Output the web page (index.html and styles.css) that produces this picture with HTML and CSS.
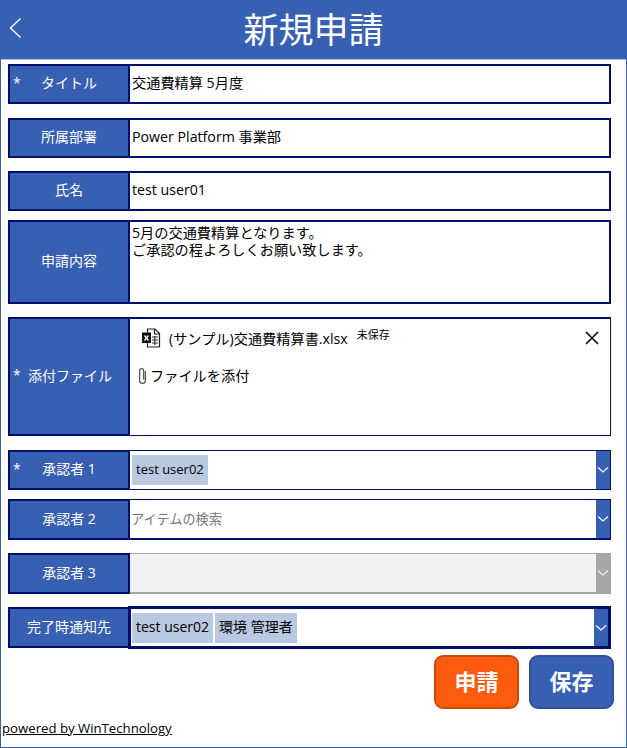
FILE: index.html
```html
<!DOCTYPE html>
<html>
<head>
    <title>新規申請</title>
    <link rel="stylesheet" href="styles.css">
</head>
<body>
    <div class="screen">
        <div class="header">
            <svg class="back" width="14" height="22" viewBox="0 0 14 22">
                <path d="M12.5 1.5 L2.5 11 L12.5 20.5" fill="none" stroke="#fff" stroke-width="1.4"/>
            </svg>
            <h1>新規申請</h1>
        </div>

        <div class="form">
            <div class="row row-title">
                <div class="label"><span class="req">*</span>タイトル</div>
                <div class="value thick">交通費精算 5月度</div>
            </div>
            <div class="row row-dept">
                <div class="label">所属部署</div>
                <div class="value thick">Power Platform 事業部</div>
            </div>
            <div class="row row-name">
                <div class="label">氏名</div>
                <div class="value thick">test user01</div>
            </div>
            <div class="row row-body">
                <div class="label">申請内容</div>
                <div class="value thick multi">5月の交通費精算となります。<br>ご承認の程よろしくお願い致します。</div>
            </div>
            <div class="row row-file">
                <div class="label"><span class="req">*</span><span class="file-label">添付ファイル</span></div>
                <div class="value thin attach">
                    <div class="file-line">
                        <svg class="xls" width="20" height="20" viewBox="0 0 20 20">
                            <path d="M6.5 4.5 V1 H14 L18.5 5.5 V19 H6.5 V15" fill="#fff" stroke="#222" stroke-width="1.2"/>
                            <path d="M13.5 1 V6 H18.5" fill="none" stroke="#222" stroke-width="1.2"/>
                            <path d="M11 9 H17 M11 12 H17 M11 15 H17 M13.8 8 V17" stroke="#333" stroke-width="1.2"/>
                            <rect x="1" y="4.5" width="9" height="10.5" fill="#111"/>
                            <path d="M3.5 7.5 L7.5 12.5 M7.5 7.5 L3.5 12.5" stroke="#fff" stroke-width="1.3"/>
                        </svg>
                        <span class="file-name">(サンプル)交通費精算書.xlsx</span>
                        <span class="unsaved">未保存</span>
                        <svg class="remove" width="14" height="14" viewBox="0 0 14 14">
                            <path d="M1 1 L13 13 M13 1 L1 13" stroke="#000" stroke-width="1.6"/>
                        </svg>
                    </div>
                    <div class="add-line">
                        <svg class="clip" width="9" height="18" viewBox="0 0 9 18">
                            <path d="M7.4 4 V13.5 A2.9 2.9 0 0 1 1.6 13.5 V3.6 A2 2 0 0 1 5.6 3.6 V12.5" fill="none" stroke="#555" stroke-width="1.3"/>
                        </svg>
                        ファイルを添付
                    </div>
                </div>
            </div>
            <div class="row row-appr1">
                <div class="label"><span class="req">*</span>承認者 1</div>
                <div class="value thin combo">
                    <div class="combo-text"><span class="tag tag-small">test user02</span></div>
                    <div class="arrow"><svg width="12" height="6" viewBox="0 0 12 6"><path d="M1 .5 L6 5 L11 .5" fill="none" stroke="#fff" stroke-width="1.2"/></svg></div>
                </div>
            </div>
            <div class="row row-appr2">
                <div class="label">承認者 2</div>
                <div class="value thin combo bottom-thick">
                    <div class="combo-text placeholder">アイテムの検索</div>
                    <div class="arrow"><svg width="12" height="6" viewBox="0 0 12 6"><path d="M1 .5 L6 5 L11 .5" fill="none" stroke="#fff" stroke-width="1.2"/></svg></div>
                </div>
            </div>
            <div class="row row-appr3">
                <div class="label">承認者 3</div>
                <div class="value combo disabled">
                    <div class="combo-text"></div>
                    <div class="arrow"><svg width="12" height="6" viewBox="0 0 12 6"><path d="M1 .5 L6 5 L11 .5" fill="none" stroke="#f2f2f2" stroke-width="1.2"/></svg></div>
                </div>
            </div>
            <div class="row row-notify">
                <div class="label">完了時通知先</div>
                <div class="value combo notify">
                    <div class="combo-text"><span class="tag">test user02</span><span class="tag">環境 管理者</span></div>
                    <div class="arrow"><svg width="12" height="6" viewBox="0 0 12 6"><path d="M1 .5 L6 5 L11 .5" fill="none" stroke="#fff" stroke-width="1.2"/></svg></div>
                </div>
            </div>
        </div>

        <div class="buttons">
            <button class="btn btn-apply">申請</button>
            <button class="btn btn-save">保存</button>
        </div>

        <a class="powered" href="#">powered by WinTechnology</a>
    </div>
</body>
</html>
```

FILE: styles.css
```css
* {
    box-sizing: border-box;
}

body {
    margin: 0;
    padding: 0;
    font-family: "Open Sans", "Noto Sans CJK JP", sans-serif;
    color: #000;
    background-color: #fff;
}

.screen {
    width: 627px;
    height: 748px;
    border: 1px solid #3860b2;
    border-top: none;
    display: flex;
    flex-direction: column;
    overflow: hidden;
}

.header {
    height: 60px;
    margin: 0 -1px;
    background-color: #3860b2;
    border-bottom: 1px solid #a9bde3;
    display: flex;
    align-items: center;
    justify-content: center;
    position: relative;
    flex-shrink: 0;
}

.back {
    position: absolute;
    left: 8px;
    top: 17px;
}

h1 {
    margin: 0;
    color: #fff;
    font-size: 35px;
    font-weight: 400;
    line-height: 58px;
}

.form {
    display: flex;
    flex-direction: column;
    padding: 4px 15px 0 7px;
}

.row {
    display: flex;
}

.row-title { height: 40px; }
.row-dept { height: 40px; margin-top: 14px; }
.row-name { height: 40px; margin-top: 13px; }
.row-body { height: 84px; margin-top: 9px; }
.row-file { height: 119px; margin-top: 13px; }
.row-appr1 { height: 40px; margin-top: 14px; }
.row-appr2 { height: 41px; margin-top: 9px; }
.row-appr3 { height: 41px; margin-top: 13px; }
.row-notify { height: 41px; margin-top: 13px; }

.label {
    width: 122px;
    flex-shrink: 0;
    padding-bottom: 4px;
    background-color: #3860b2;
    border: 2px solid #000f6b;
    color: #fff;
    font-size: 14px;
    display: flex;
    align-items: center;
    justify-content: center;
    position: relative;
}

.req {
    position: absolute;
    left: 3px;
    font-size: 14px;
}

.file-label {
    margin-left: 2px;
}

.value {
    flex: 1;
    min-width: 0;
    margin-left: -2px;
    font-size: 14.2px;
    background-color: #fff;
}

.thick {
    border: 2px solid #000f6b;
    padding: 0 2px 2px;
    display: flex;
    align-items: center;
    line-height: 18px;
}

.thin {
    border: 1px solid #000f6b;
}

.multi {
    align-items: flex-start;
    line-height: 17px;
    padding-top: 2px;
}

.attach {
    margin-left: -1px;
    padding: 0 0 0 8px;
    border-top-width: 2px;
}

.file-line {
    height: 37px;
    padding: 0 11px 0 3px;
    display: flex;
    align-items: center;
}

.file-name {
    margin-left: 8px;
    font-size: 14.2px;
}

.unsaved {
    font-size: 11px;
    margin-left: 9px;
    margin-bottom: 8px;
}

.remove {
    margin-left: auto;
}

.add-line {
    margin-top: 10px;
    display: flex;
    align-items: center;
    gap: 3px;
    line-height: 20px;
}

.combo {
    display: flex;
    align-items: stretch;
    padding: 0;
    margin-left: -1px;
}

.combo-text {
    flex: 1;
    display: flex;
    align-items: center;
    gap: 2px;
    padding-left: 2px;
}

.arrow {
    width: 14px;
    flex-shrink: 0;
    background-color: #3860b2;
    display: flex;
    align-items: center;
    justify-content: center;
}

.tag {
    height: 30px;
    line-height: 28px;
    padding: 0 4px;
    background-color: #b9c9e2;
    font-size: 14px;
}

.tag-small {
    font-size: 13px;
}

.placeholder {
    color: #777;
    font-size: 13.2px;
    padding-left: 1px;
    padding-bottom: 2px;
}

.bottom-thick {
    border-bottom-width: 2px;
}

.disabled {
    background-color: #f2f2f2;
    border-top: 1px solid #a6a6a6;
    border-bottom: 2px solid #a6a6a6;
    border-right: 1px solid #a6a6a6;
}

.disabled .arrow {
    background-color: #a6a6a6;
}

.notify {
    height: 43px;
    margin-top: -1px;
    margin-left: -2px;
    border: 3px solid #000f6b;
}

.notify .combo-text {
    padding-left: 1px;
}

.buttons {
    display: flex;
    justify-content: flex-end;
    gap: 10px;
    padding-right: 12px;
    margin-top: 7px;
}

.btn {
    width: 85px;
    height: 54px;
    border-radius: 9px;
    color: #fff;
    font-family: inherit;
    font-size: 22px;
    font-weight: 700;
    line-height: 44px;
    padding: 0 0 3px;
}

.btn-apply {
    background-color: #fd5b0d;
    border: 2px solid #c94a0d;
}

.btn-save {
    background-color: #3860b2;
    border: 2px solid #2f5198;
}

.powered {
    color: #000;
    font-size: 13.2px;
    line-height: 18px;
    margin-top: 10px;
    padding-left: 1px;
}
```
